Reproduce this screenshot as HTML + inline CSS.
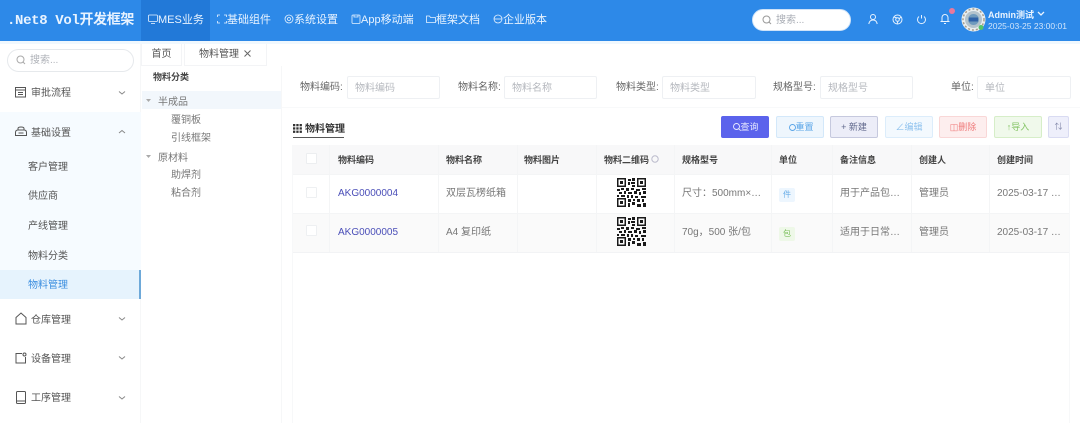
<!DOCTYPE html>
<html lang="zh"><head><meta charset="utf-8"><style>
*{box-sizing:border-box}
html,body{margin:0;padding:0}
body{width:1080px;height:423px;overflow:hidden;position:relative;background:#fff;font-family:"Liberation Sans","Noto Sans CJK SC",sans-serif;font-size:10px;color:#555;filter:blur(.3px)}
.a{position:absolute;white-space:nowrap}
svg{position:absolute;overflow:visible}
.top{left:0;top:0;width:1080px;height:41px;background:#2d89e8}
.nav{top:13px;color:#e8f3ff;font-size:11px;line-height:14px}
.side{color:#555;font-size:10px;line-height:14px}
.lab{top:81px;font-size:10px;line-height:14px;color:#666}
.inp{top:76px;height:23px;border:1px solid #eef0f3;border-radius:2px;color:#b5b8be;font-size:10px;line-height:23px;padding-left:7px;background:#fff}
.btn{top:116px;height:22px;width:48px;border-radius:2px;font-size:9px;line-height:20px;text-align:center;border:1px solid}
.th{top:154px;font-size:9px;font-weight:bold;color:#444;line-height:13px}
.td{font-size:10px;color:#777;line-height:14px}
.v{width:1px;background:#f4f5f6}
.ic{fill:none;stroke:#555;stroke-width:1}
</style></head><body>

<div class="a top"></div>
<div class="a" style="left:141px;top:0;width:69px;height:41px;background:#2279d8"></div>
<div class="a" style="left:7px;top:12px;font-family:'Liberation Mono','Noto Sans CJK SC',monospace;font-size:14px;font-weight:bold;color:#e8f3ff;line-height:19px;letter-spacing:-.35px">.Net8 Vol开发框架</div>

<svg style="left:148px;top:14px" width="10" height="10" fill="none" stroke="#e8f3ff" stroke-width=".8"><rect x=".5" y="1" width="9" height="6.500" rx="1"/><path d="M3 9.500h4"/></svg>
<div class="a nav" style="left:158px">MES业务</div>
<svg style="left:217px;top:14px" width="10" height="10" fill="none" stroke="#e8f3ff" stroke-width=".8"><path d="M.5 3V1h2.500M7 1h2.500v2M9.500 7v2H7M3 9H.5V7"/></svg>
<div class="a nav" style="left:227px">基础组件</div>
<svg style="left:284px;top:14px" width="10" height="10" fill="none" stroke="#e8f3ff" stroke-width=".8"><circle cx="5" cy="5" r="4"/><circle cx="5" cy="5" r="1.500"/></svg>
<div class="a nav" style="left:294px">系统设置</div>
<svg style="left:351px;top:14px" width="10" height="10" fill="none" stroke="#e8f3ff" stroke-width=".8"><rect x="1" y="1" width="8" height="8.500" rx="1"/><path d="M3 1v2h4V1"/></svg>
<div class="a nav" style="left:361px">App移动端</div>
<svg style="left:426px;top:14px" width="10" height="10" fill="none" stroke="#e8f3ff" stroke-width=".8"><path d="M.5 2h3l1 1.500h5v5h-9z"/></svg>
<div class="a nav" style="left:436px">框架文档</div>
<svg style="left:493px;top:14px" width="10" height="10" fill="none" stroke="#e8f3ff" stroke-width=".8"><circle cx="5" cy="5" r="4"/><path d="M1 5h8"/></svg>
<div class="a nav" style="left:503px">企业版本</div>

<div class="a" style="left:752px;top:9px;width:99px;height:22px;background:#fff;border-radius:11px;border:1px solid #cfe3f8;color:#a9adb5;font-size:10px;line-height:21px;padding-left:23px">搜索...</div>
<svg style="left:762px;top:15px" width="10" height="10" fill="none" stroke="#999"><circle cx="4.500" cy="4.500" r="3.500"/><path d="M7 7l2 2"/></svg>

<svg style="left:868px;top:14px" width="10" height="11" fill="none" stroke="#e8f3ff"><circle cx="5" cy="3" r="2.500"/><path d="M.8 10c.5-3 2-4 4.200-4s3.700 1 4.200 4"/></svg>
<svg style="left:892px;top:14px" width="11" height="11" fill="none" stroke="#e8f3ff"><circle cx="5.500" cy="5.500" r="4.500"/><circle cx="5.500" cy="5.500" r="1.800"/><path d="M2 3l3 1M9 3L7 5M5 10l1-3"/></svg>
<svg style="left:916px;top:14px" width="11" height="11" fill="none" stroke="#e8f3ff"><path d="M3 2.500a4 4 0 1 0 5 0M5.500 1v3.500"/></svg>
<svg style="left:940px;top:13px" width="10" height="11" fill="none" stroke="#e8f3ff"><path d="M.5 8.500h9M2 8.500V4.500a3 3 0 0 1 6 0v4M4 10.500h2"/></svg>
<div class="a" style="left:949px;top:8px;width:6px;height:6px;border-radius:50%;background:#e8789c"></div>

<svg style="left:961px;top:7px" width="25" height="25"><circle cx="12.500" cy="12.500" r="12" fill="#e9eef0"/><circle cx="12.500" cy="12.500" r="8.500" fill="#b3c3cd"/><circle cx="12.500" cy="12.500" r="5.500" fill="#6f9abd"/><rect x="8" y="10.500" width="9" height="4" fill="#2f62a8"/><circle cx="12.500" cy="12.500" r="10.500" fill="none" stroke="#a89e8c" stroke-width="1.500" stroke-dasharray="2 2"/><circle cx="20" cy="20.500" r="2.500" fill="#55c46a"/></svg>
<div class="a" style="left:988px;top:9px;font-size:9px;font-weight:bold;color:#e8f3ff;line-height:12px">Admin测试</div>
<svg style="left:1037px;top:11px" width="8" height="6" fill="none" stroke="#e8f3ff" stroke-width="1.300"><path d="M1 1l3 3 3-3"/></svg>
<div class="a" style="left:988px;top:20px;font-size:8.500px;color:#cfe4fb;line-height:12px">2025-03-25 23:00:01</div>

<!-- Left sidebar -->
<div class="a" style="left:0;top:41px;width:141px;height:382px;background:#fff;border-right:1px solid #f6f7f8"></div>
<div class="a" style="left:0;top:41px;width:1080px;height:3px;background:#f0f8fe"></div>
<div class="a" style="left:7px;top:49px;width:127px;height:23px;border:1px solid #e6e9ec;border-radius:12px;color:#b0b3b9;line-height:22px;padding-left:22px">搜索...</div>
<svg style="left:16px;top:55px" width="10" height="10" fill="none" stroke="#aaa"><circle cx="4.500" cy="4.500" r="3.500"/><path d="M7 7l2 2"/></svg>

<svg class="ic" style="left:15px;top:86px" width="12" height="12"><rect x=".5" y="1.500" width="10" height="9.500"/><path d="M.5 4h10M3 6.500h5M3 8.500h5"/></svg>
<div class="a side" style="left:31px;top:87px">审批流程</div>
<svg style="left:118px;top:90px" width="8" height="6" fill="none" stroke="#888"><path d="M1 1.500l3 2.500 3-2.500"/></svg>

<div class="a" style="left:0;top:112px;width:141px;height:187px;background:#f6fbff"></div>
<svg class="ic" style="left:15px;top:126px" width="12" height="11"><path d="M3 4V2.500C3 1.500 4 1 6 1s3 .5 3 1.500V4M.5 6.500c0-1.500 1-2.500 2.500-2.500h6c1.500 0 2.500 1 2.500 2.500v3h-11zM3.500 7h5"/></svg>
<div class="a side" style="left:31px;top:127px">基础设置</div>
<svg style="left:118px;top:129px" width="8" height="6" fill="none" stroke="#888"><path d="M1 4l3-2.500L7 4"/></svg>

<div class="a side" style="left:28px;top:161px">客户管理</div>
<div class="a side" style="left:28px;top:190px">供应商</div>
<div class="a side" style="left:28px;top:220px">产线管理</div>
<div class="a side" style="left:28px;top:250px">物料分类</div>
<div class="a" style="left:0;top:270px;width:141px;height:29px;background:#e6f3fd"></div>
<div class="a" style="left:139px;top:270px;width:2px;height:29px;background:#6ea9d9"></div>
<div class="a side" style="left:28px;top:279px;color:#3d8fe0">物料管理</div>

<svg class="ic" style="left:15px;top:312px" width="12" height="13"><path d="M1 5.500L6 1l5 4.500V12H1z"/></svg>
<div class="a side" style="left:31px;top:314px">仓库管理</div>
<svg style="left:118px;top:316px" width="8" height="6" fill="none" stroke="#888"><path d="M1 1.500l3 2.500 3-2.500"/></svg>
<svg class="ic" style="left:15px;top:352px" width="12" height="12"><path d="M7 1.500H1V11h9.500V5"/><circle cx="9.500" cy="2.500" r="1.500"/></svg>
<div class="a side" style="left:31px;top:353px">设备管理</div>
<svg style="left:118px;top:355px" width="8" height="6" fill="none" stroke="#888"><path d="M1 1.500l3 2.500 3-2.500"/></svg>
<svg class="ic" style="left:16px;top:391px" width="10" height="13"><rect x=".5" y=".5" width="9" height="12" rx="1"/><path d="M.5 10h9"/></svg>
<div class="a side" style="left:31px;top:392px">工序管理</div>
<svg style="left:118px;top:395px" width="8" height="6" fill="none" stroke="#888"><path d="M1 1.500l3 2.500 3-2.500"/></svg>

<!-- Tabs -->
<div class="a" style="left:141px;top:44px;width:41px;height:22px;border:1px solid #f3f4f6;border-top:0;text-align:center;line-height:21px;color:#555;font-size:10px">首页</div>
<div class="a" style="left:184px;top:44px;width:83px;height:22px;border:1px solid #f3f4f6;border-top:0;line-height:21px;color:#555;font-size:10px;padding-left:14px">物料管理</div>
<svg style="left:244px;top:50px" width="7" height="7" fill="none" stroke="#666"><path d="M.5.500l6 6M6.500.500l-6 6"/></svg>

<!-- Tree -->
<div class="a" style="left:141px;top:66px;width:141px;height:357px;border-right:1px solid #f6f7f8"></div>
<div class="a" style="left:153px;top:71px;font-size:9px;font-weight:bold;color:#444;line-height:13px">物料分类</div>
<div class="a" style="left:142px;top:91px;width:139px;height:18px;background:#f2f7fc"></div>
<svg style="left:146px;top:99px" width="6" height="4"><path d="M0 0h5L2.500 3z" fill="#aaa"/></svg>
<div class="a td" style="left:158px;top:96px">半成品</div>
<div class="a td" style="left:171px;top:114px">覆铜板</div>
<div class="a td" style="left:171px;top:132px">引线框架</div>
<svg style="left:146px;top:155px" width="6" height="4"><path d="M0 0h5L2.500 3z" fill="#aaa"/></svg>
<div class="a td" style="left:158px;top:152px">原材料</div>
<div class="a td" style="left:171px;top:169px">助焊剂</div>
<div class="a td" style="left:171px;top:187px">粘合剂</div>

<!-- Search form -->
<div class="a lab" style="left:300px">物料编码:</div>
<div class="a inp" style="left:347px;width:93px">物料编码</div>
<div class="a lab" style="left:458px">物料名称:</div>
<div class="a inp" style="left:504px;width:93px">物料名称</div>
<div class="a lab" style="left:616px">物料类型:</div>
<div class="a inp" style="left:662px;width:94px">物料类型</div>
<div class="a lab" style="left:773px">规格型号:</div>
<div class="a inp" style="left:820px;width:93px">规格型号</div>
<div class="a lab" style="left:951px">单位:</div>
<div class="a inp" style="left:977px;width:94px">单位</div>
<div class="a" style="left:282px;top:107px;width:798px;height:1px;background:#f8f9fa"></div>

<!-- Toolbar -->
<svg style="left:293px;top:124px" width="9" height="9" fill="#333"><rect width="2.300" height="2.300"/><rect x="3.300" width="2.300" height="2.300"/><rect x="6.600" width="2.300" height="2.300"/><rect y="3.300" width="2.300" height="2.300"/><rect x="3.300" y="3.300" width="2.300" height="2.300"/><rect x="6.600" y="3.300" width="2.300" height="2.300"/><rect y="6.600" width="2.300" height="2.300"/><rect x="3.300" y="6.600" width="2.300" height="2.300"/><rect x="6.600" y="6.600" width="2.300" height="2.300"/></svg>
<div class="a" style="left:305px;top:123px;font-size:10px;font-weight:bold;color:#333;line-height:14px">物料管理</div>
<div class="a" style="left:293px;top:137px;width:51px;height:1px;background:#555"></div>

<div class="a btn" style="left:721px;background:#5b63ec;border-color:#5b63ec;color:#e8eaff"><svg style="left:11px;top:6px" width="8" height="8" fill="none" stroke="#e8eaff" stroke-width=".9"><circle cx="3.500" cy="3.500" r="3"/><path d="M5.700 5.700l2 2"/></svg><span style="padding-left:9px">查询</span></div>
<div class="a btn" style="left:776px;background:#eef6fd;border-color:#d3e8fa;color:#5aa5e8"><svg style="left:12px;top:7px" width="7" height="7" fill="none" stroke="#5aa5e8" stroke-width=".9"><circle cx="3.500" cy="3.500" r="3"/></svg><span style="padding-left:9px">重置</span></div>
<div class="a btn" style="left:830px;background:#ecedf8;border-color:#c6c9de;color:#60688c">+ 新建</div>
<div class="a btn" style="left:885px;background:#f3f9fe;border-color:#dcedfb;color:#8fc2ee">∠编辑</div>
<div class="a btn" style="left:939px;background:#fdeeee;border-color:#f9d7d7;color:#ef7b7b">◫删除</div>
<div class="a btn" style="left:994px;background:#f0f9eb;border-color:#d6eec8;color:#85c566">↑导入</div>
<div class="a btn" style="left:1048px;width:21px;background:#eeeffb;border-color:#d9dbf2;color:#8086a8;font-size:8px">⇅</div>

<!-- Table -->
<div class="a" style="left:293px;top:145px;width:776px;height:29px;background:#f8f8f9"></div>
<div class="a" style="left:293px;top:213px;width:776px;height:39px;background:#fafafa"></div>
<div class="a" style="left:293px;top:174px;width:776px;height:1px;background:#f4f5f6"></div>
<div class="a" style="left:293px;top:213px;width:776px;height:1px;background:#f4f5f6"></div>
<div class="a" style="left:293px;top:252px;width:776px;height:1px;background:#f2f3f5"></div>
<div class="a" style="left:292px;top:145px;width:1px;height:278px;background:#f7f8f9"></div>
<div class="a" style="left:1069px;top:145px;width:1px;height:278px;background:#f7f8f9"></div>
<div class="a v" style="left:329px;top:145px;height:107px"></div>
<div class="a v" style="left:438px;top:145px;height:107px"></div>
<div class="a v" style="left:517px;top:145px;height:107px"></div>
<div class="a v" style="left:596px;top:145px;height:107px"></div>
<div class="a v" style="left:674px;top:145px;height:107px"></div>
<div class="a v" style="left:771px;top:145px;height:107px"></div>
<div class="a v" style="left:832px;top:145px;height:107px"></div>
<div class="a v" style="left:911px;top:145px;height:107px"></div>
<div class="a v" style="left:989px;top:145px;height:107px"></div>

<div class="a" style="left:306px;top:153px;width:11px;height:11px;border:1px solid #eceef0;background:#fff;border-radius:1px"></div>
<div class="a th" style="left:338px">物料编码</div>
<div class="a th" style="left:446px">物料名称</div>
<div class="a th" style="left:524px">物料图片</div>
<div class="a th" style="left:604px">物料二维码</div>
<svg style="left:651px;top:155px" width="8" height="8" fill="none" stroke="#bbc"><circle cx="4" cy="4" r="3.200"/></svg>
<div class="a th" style="left:682px">规格型号</div>
<div class="a th" style="left:779px">单位</div>
<div class="a th" style="left:840px">备注信息</div>
<div class="a th" style="left:919px">创建人</div>
<div class="a th" style="left:997px">创建时间</div>

<div class="a" style="left:306px;top:187px;width:11px;height:11px;border:1px solid #eef0f2;background:#fff;border-radius:1px"></div>
<div class="a td" style="left:338px;top:187px;color:#4b4fb8">AKG0000004</div>
<div class="a td" style="left:446px;top:187px">双层瓦楞纸箱</div>
<div class="a td" style="left:682px;top:187px">尺寸：500mm×…</div>
<div class="a" style="left:779px;top:188px;width:16px;height:14px;background:#edf6fe;border-radius:2px;color:#6aaee8;font-size:8px;line-height:14px;text-align:center">件</div>
<div class="a td" style="left:840px;top:187px">用于产品包…</div>
<div class="a td" style="left:919px;top:187px">管理员</div>
<div class="a td" style="left:997px;top:187px">2025-03-17 …</div>

<div class="a" style="left:306px;top:225px;width:11px;height:11px;border:1px solid #eef0f2;background:#fff;border-radius:1px"></div>
<div class="a td" style="left:338px;top:226px;color:#4b4fb8">AKG0000005</div>
<div class="a td" style="left:446px;top:226px">A4 复印纸</div>
<div class="a td" style="left:682px;top:226px">70g，500 张/包</div>
<div class="a" style="left:779px;top:227px;width:16px;height:14px;background:#eef8e8;border-radius:2px;color:#7cc05c;font-size:8px;line-height:14px;text-align:center">包</div>
<div class="a td" style="left:840px;top:226px">适用于日常…</div>
<div class="a td" style="left:919px;top:226px">管理员</div>
<div class="a td" style="left:997px;top:226px">2025-03-17 …</div>

<svg width="0" height="0" style="left:0;top:0"><defs><g id="qr" fill="#1a1a1a"><path d="M0 0h9v9H0zM1.500 1.500v6h6v-6zM20 0h9v9h-9zM21.500 1.500v6h6v-6zM0 20h9v9H0zM1.500 21.500v6h6v-6z" fill-rule="evenodd"/><rect x="3" y="3" width="3" height="3"/><rect x="23" y="3" width="3" height="3"/><rect x="3" y="23" width="3" height="3"/><path d="M11 1h3v2h-3zM15 0h3v3h-3zM11 4h2v3h-2zM14 4h4v2h-4zM15 7h3v2h-3zM0 11h3v2H0zM4 10h3v2H4zM9 10h3v3H9zM14 10h3v2h-3zM19 11h4v2h-4zM25 10h4v2h-4zM2 14h3v2H2zM7 13h2v3H7zM11 14h4v2h-4zM17 13h3v3h-3zM22 14h2v3h-2zM26 13h3v3h-3zM0 17h2v2H0zM4 17h4v2H4zM10 17h2v3h-2zM14 17h2v3h-2zM18 18h3v2h-3zM24 18h5v2h-5zM11 21h3v3h-3zM16 21h2v2h-2zM20 21h3v3h-3zM25 21h2v3h-2zM11 25h2v4h-2zM15 24h3v3h-3zM20 26h4v3h-4zM26 25h3v4h-3z"/></g></defs></svg>
<svg style="left:617px;top:178px" width="29" height="29"><use href="#qr"/></svg>
<svg style="left:617px;top:217px" width="29" height="29"><use href="#qr"/></svg>

</body></html>
